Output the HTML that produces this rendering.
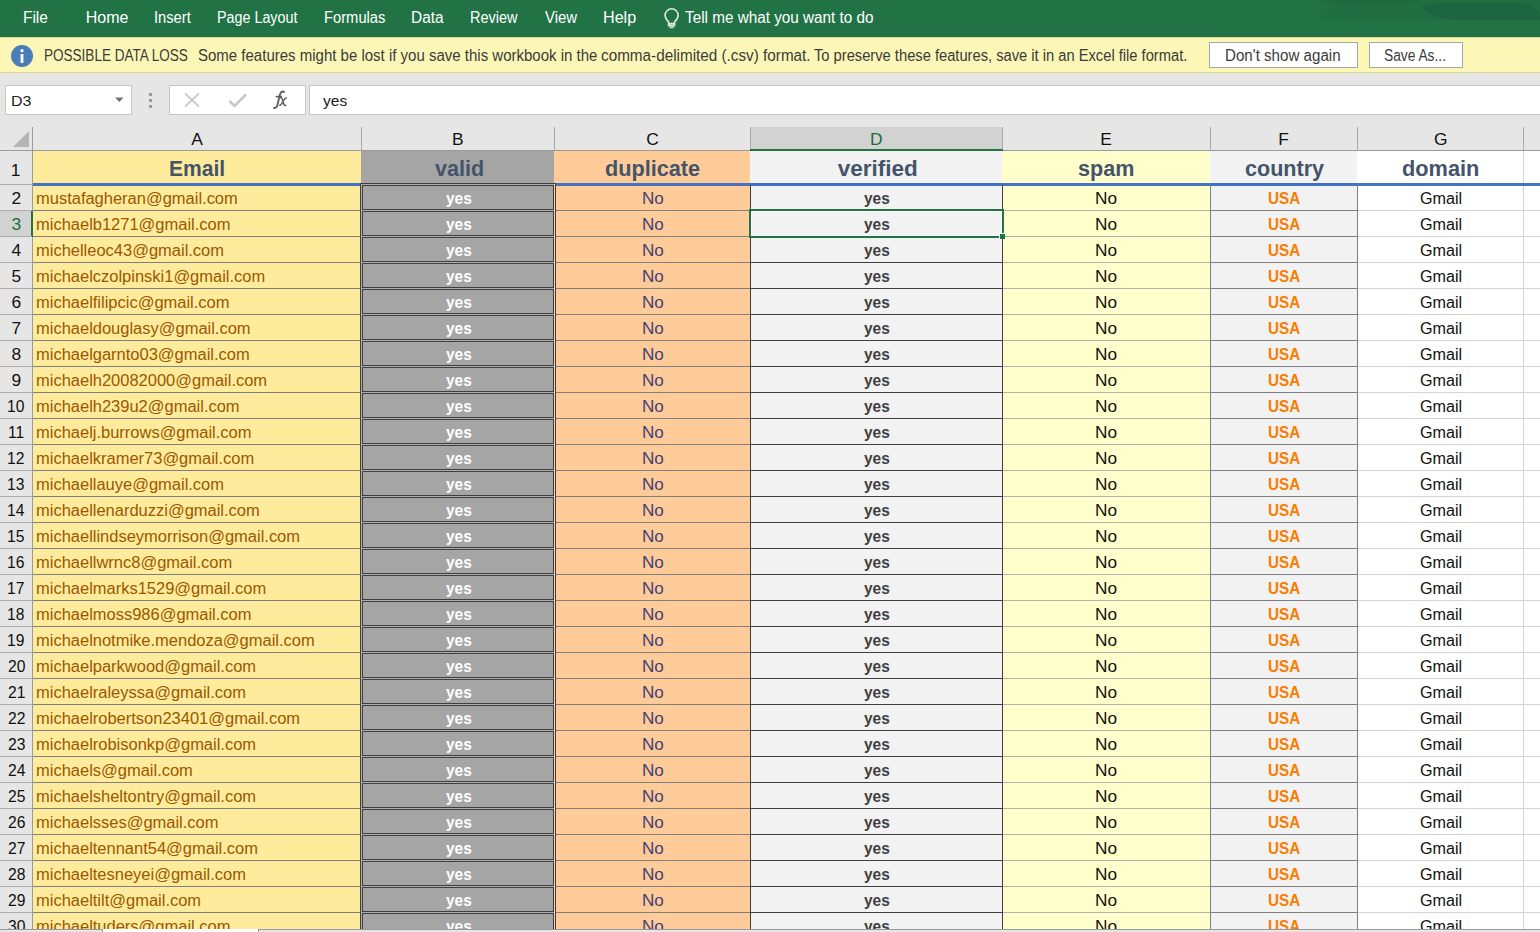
<!DOCTYPE html>
<html><head><meta charset="utf-8"><title>Excel</title>
<style>
html,body{margin:0;padding:0;width:1540px;height:932px;overflow:hidden;background:#E6E6E6;font-family:"Liberation Sans", sans-serif;}
body>div,body>span,body>svg{position:absolute;}
.t{white-space:pre;line-height:1;transform-origin:0 0;}
</style></head><body>
<div style="left:0px;top:0px;width:1540px;height:37px;background:#217346;"></div>
<div style="left:1290px;top:0;width:250px;height:20px;background:linear-gradient(to right,rgba(25,80,45,0) 0%,rgba(25,80,45,0.16) 25%,rgba(25,80,45,0.16) 100%)"></div>
<svg style="left:1300px;top:0" width="240" height="21" viewBox="0 0 240 21"><path d="M20 0H110C118 2 100 5 60 5 40 5 25 3 20 0z" fill="#1F6841" opacity="0.8"/><path d="M123 6C126 4 135 3 150 3H220C232 3 238 10 240 16V20H160C140 20 125 14 123 6z" fill="#1D6440"/><path d="M180 0H235L240 6V0z" fill="#1F6A42"/></svg>
<svg style="left:662px;top:6px" width="20" height="24" viewBox="0 0 20 24"><path d="M6.4 15.6C4.6 14 3.1 12 3.1 9.3A6.5 6.5 0 0 1 16.1 9.3C16.1 12 14.6 14 12.8 15.6" fill="none" stroke="#dfe9e2" stroke-width="1.6"/><path d="M6.6 15.3V19.6H12.6V15.3M6.6 17.6H12.6" fill="none" stroke="#dfe9e2" stroke-width="1.6"/><path d="M7.6 21.5H11.6" stroke="#dfe9e2" stroke-width="1.4"/></svg>
<div style="left:0px;top:37px;width:1540px;height:35px;background:#FCF7B7;"></div>
<div style="left:0px;top:72px;width:1540px;height:1px;background:#DCD592;"></div>
<div style="left:0px;top:37px;width:1540px;height:1px;background:#E4DC8C;"></div>
<svg style="left:10px;top:44px" width="24" height="24" viewBox="0 0 24 24"><circle cx="12" cy="12" r="11" fill="#4A7EBB"/><rect x="10.6" y="10" width="2.8" height="9" fill="#fff"/><circle cx="12" cy="6.7" r="1.6" fill="#fff"/></svg>
<div style="left:1209px;top:42px;width:149px;height:26px;background:#fff;border:1px solid #A6A6AC;box-sizing:border-box"></div>
<div style="left:1369px;top:42px;width:94px;height:26px;background:#fff;border:1px solid #A6A6AC;box-sizing:border-box"></div>
<div style="left:0px;top:73px;width:1540px;height:54px;background:#E6E6E6;"></div>
<div style="left:5px;top:85px;width:127px;height:30px;background:#fff;border:1px solid #C6C6C6;box-sizing:border-box"></div>
<svg style="left:115px;top:97px" width="9" height="6"><path d="M0 0.5h8.5L4.25 5z" fill="#707070"/></svg>
<div style="left:149px;top:93px;width:3px;height:3px;background:#9a9a9a;"></div>
<div style="left:149px;top:99px;width:3px;height:3px;background:#9a9a9a;"></div>
<div style="left:149px;top:105px;width:3px;height:3px;background:#9a9a9a;"></div>
<div style="left:169px;top:85px;width:137px;height:30px;background:#fff;border:1px solid #C6C6C6;box-sizing:border-box"></div>
<svg style="left:183px;top:92px" width="18" height="16"><path d="M2 1.5L16 14.5M16 1.5L2 14.5" stroke="#c8c8c8" stroke-width="1.8"/></svg>
<svg style="left:228px;top:92px" width="20" height="17"><path d="M1.5 9l5 5L18 2.5" fill="none" stroke="#c8c8c8" stroke-width="2.6"/></svg>
<svg style="left:268px;top:88px" width="24" height="24" viewBox="0 0 24 24"><path d="M16.4 4.8C16 3.3 14.4 3 13.2 4.1 12 5.3 11.5 7.6 11 10.2L9.3 17.4C8.7 19.7 6.9 20.5 5.2 19.6" fill="none" stroke="#5f5f5f" stroke-width="1.9"/><path d="M7.6 8.6H14" stroke="#5f5f5f" stroke-width="1.6"/><path d="M12 9.9C13.5 9.4 14.2 10.6 14.8 12.6L15.8 16C16.2 17.4 17.2 17.9 18.3 17.2M18.9 10.2C17.6 9.8 16.5 10.8 15.3 12.8L13.7 15.6C13 16.9 12.1 17.6 11.1 17.1" fill="none" stroke="#5f5f5f" stroke-width="1.5"/></svg>
<div style="left:309px;top:85px;width:1240px;height:30px;background:#fff;border:1px solid #C6C6C6;box-sizing:border-box"></div>
<div style="left:0px;top:127px;width:1540px;height:24px;background:#E6E6E6;"></div>
<div style="left:750px;top:127px;width:252px;height:23px;background:#D2D2D2;"></div>
<div style="left:0px;top:150px;width:1540px;height:1px;background:#9B9B9B;"></div>
<div style="left:361px;top:127px;width:1px;height:23px;background:#ABABAB;"></div>
<div style="left:554px;top:127px;width:1px;height:23px;background:#ABABAB;"></div>
<div style="left:750px;top:127px;width:1px;height:23px;background:#ABABAB;"></div>
<div style="left:1002px;top:127px;width:1px;height:23px;background:#ABABAB;"></div>
<div style="left:1210px;top:127px;width:1px;height:23px;background:#ABABAB;"></div>
<div style="left:1357px;top:127px;width:1px;height:23px;background:#ABABAB;"></div>
<div style="left:1523px;top:127px;width:1px;height:23px;background:#ABABAB;"></div>
<div style="left:750px;top:149px;width:253px;height:2px;background:#217346;"></div>
<svg style="left:13px;top:131px" width="17" height="16"><path d="M16 0V16H0z" fill="#B4B4B4"/></svg>
<div style="left:0px;top:151px;width:32px;height:781px;background:#E6E6E6;"></div>
<div style="left:32px;top:127px;width:1px;height:805px;background:#9B9B9B;"></div>
<div style="left:0px;top:211px;width:31px;height:26px;background:#D2D2D2;"></div>
<div style="left:0px;top:184px;width:32px;height:1px;background:#ABABAB;"></div>
<div style="left:31px;top:211px;width:2px;height:26px;background:#217346;"></div>
<div style="left:33px;top:151px;width:328px;height:781px;background:#FFEB9C;"></div>
<div style="left:361px;top:151px;width:193px;height:781px;background:#A5A5A5;"></div>
<div style="left:554px;top:151px;width:196px;height:781px;background:#FFCC99;"></div>
<div style="left:750px;top:151px;width:252px;height:781px;background:#F2F2F2;"></div>
<div style="left:1002px;top:151px;width:208px;height:781px;background:#FFFFCC;"></div>
<div style="left:1210px;top:151px;width:147px;height:781px;background:#F2F2F2;"></div>
<div style="left:1357px;top:151px;width:166px;height:781px;background:#FFFFFF;"></div>
<div style="left:1523px;top:151px;width:177px;height:781px;background:#FFFFFF;"></div>
<div style="left:33px;top:183px;width:1507px;height:3px;background:#4472C4;"></div>
<div style="left:0px;top:210px;width:32px;height:1px;background:#ABABAB;"></div>
<div style="left:33px;top:210px;width:328px;height:1px;background:#7F7F7F;"></div>
<div style="left:555px;top:210px;width:195px;height:1px;background:#7F7F7F;"></div>
<div style="left:751px;top:210px;width:251px;height:1px;background:#3F3F3F;"></div>
<div style="left:1003px;top:210px;width:207px;height:1px;background:#B2B2B2;"></div>
<div style="left:1211px;top:210px;width:146px;height:1px;background:#7F7F7F;"></div>
<div style="left:1358px;top:210px;width:165px;height:1px;background:#D4D4D4;"></div>
<div style="left:1524px;top:210px;width:176px;height:1px;background:#D4D4D4;"></div>
<div style="left:0px;top:236px;width:32px;height:1px;background:#ABABAB;"></div>
<div style="left:33px;top:236px;width:328px;height:1px;background:#7F7F7F;"></div>
<div style="left:555px;top:236px;width:195px;height:1px;background:#7F7F7F;"></div>
<div style="left:751px;top:236px;width:251px;height:1px;background:#3F3F3F;"></div>
<div style="left:1003px;top:236px;width:207px;height:1px;background:#B2B2B2;"></div>
<div style="left:1211px;top:236px;width:146px;height:1px;background:#7F7F7F;"></div>
<div style="left:1358px;top:236px;width:165px;height:1px;background:#D4D4D4;"></div>
<div style="left:1524px;top:236px;width:176px;height:1px;background:#D4D4D4;"></div>
<div style="left:0px;top:262px;width:32px;height:1px;background:#ABABAB;"></div>
<div style="left:33px;top:262px;width:328px;height:1px;background:#7F7F7F;"></div>
<div style="left:555px;top:262px;width:195px;height:1px;background:#7F7F7F;"></div>
<div style="left:751px;top:262px;width:251px;height:1px;background:#3F3F3F;"></div>
<div style="left:1003px;top:262px;width:207px;height:1px;background:#B2B2B2;"></div>
<div style="left:1211px;top:262px;width:146px;height:1px;background:#7F7F7F;"></div>
<div style="left:1358px;top:262px;width:165px;height:1px;background:#D4D4D4;"></div>
<div style="left:1524px;top:262px;width:176px;height:1px;background:#D4D4D4;"></div>
<div style="left:0px;top:288px;width:32px;height:1px;background:#ABABAB;"></div>
<div style="left:33px;top:288px;width:328px;height:1px;background:#7F7F7F;"></div>
<div style="left:555px;top:288px;width:195px;height:1px;background:#7F7F7F;"></div>
<div style="left:751px;top:288px;width:251px;height:1px;background:#3F3F3F;"></div>
<div style="left:1003px;top:288px;width:207px;height:1px;background:#B2B2B2;"></div>
<div style="left:1211px;top:288px;width:146px;height:1px;background:#7F7F7F;"></div>
<div style="left:1358px;top:288px;width:165px;height:1px;background:#D4D4D4;"></div>
<div style="left:1524px;top:288px;width:176px;height:1px;background:#D4D4D4;"></div>
<div style="left:0px;top:314px;width:32px;height:1px;background:#ABABAB;"></div>
<div style="left:33px;top:314px;width:328px;height:1px;background:#7F7F7F;"></div>
<div style="left:555px;top:314px;width:195px;height:1px;background:#7F7F7F;"></div>
<div style="left:751px;top:314px;width:251px;height:1px;background:#3F3F3F;"></div>
<div style="left:1003px;top:314px;width:207px;height:1px;background:#B2B2B2;"></div>
<div style="left:1211px;top:314px;width:146px;height:1px;background:#7F7F7F;"></div>
<div style="left:1358px;top:314px;width:165px;height:1px;background:#D4D4D4;"></div>
<div style="left:1524px;top:314px;width:176px;height:1px;background:#D4D4D4;"></div>
<div style="left:0px;top:340px;width:32px;height:1px;background:#ABABAB;"></div>
<div style="left:33px;top:340px;width:328px;height:1px;background:#7F7F7F;"></div>
<div style="left:555px;top:340px;width:195px;height:1px;background:#7F7F7F;"></div>
<div style="left:751px;top:340px;width:251px;height:1px;background:#3F3F3F;"></div>
<div style="left:1003px;top:340px;width:207px;height:1px;background:#B2B2B2;"></div>
<div style="left:1211px;top:340px;width:146px;height:1px;background:#7F7F7F;"></div>
<div style="left:1358px;top:340px;width:165px;height:1px;background:#D4D4D4;"></div>
<div style="left:1524px;top:340px;width:176px;height:1px;background:#D4D4D4;"></div>
<div style="left:0px;top:366px;width:32px;height:1px;background:#ABABAB;"></div>
<div style="left:33px;top:366px;width:328px;height:1px;background:#7F7F7F;"></div>
<div style="left:555px;top:366px;width:195px;height:1px;background:#7F7F7F;"></div>
<div style="left:751px;top:366px;width:251px;height:1px;background:#3F3F3F;"></div>
<div style="left:1003px;top:366px;width:207px;height:1px;background:#B2B2B2;"></div>
<div style="left:1211px;top:366px;width:146px;height:1px;background:#7F7F7F;"></div>
<div style="left:1358px;top:366px;width:165px;height:1px;background:#D4D4D4;"></div>
<div style="left:1524px;top:366px;width:176px;height:1px;background:#D4D4D4;"></div>
<div style="left:0px;top:392px;width:32px;height:1px;background:#ABABAB;"></div>
<div style="left:33px;top:392px;width:328px;height:1px;background:#7F7F7F;"></div>
<div style="left:555px;top:392px;width:195px;height:1px;background:#7F7F7F;"></div>
<div style="left:751px;top:392px;width:251px;height:1px;background:#3F3F3F;"></div>
<div style="left:1003px;top:392px;width:207px;height:1px;background:#B2B2B2;"></div>
<div style="left:1211px;top:392px;width:146px;height:1px;background:#7F7F7F;"></div>
<div style="left:1358px;top:392px;width:165px;height:1px;background:#D4D4D4;"></div>
<div style="left:1524px;top:392px;width:176px;height:1px;background:#D4D4D4;"></div>
<div style="left:0px;top:418px;width:32px;height:1px;background:#ABABAB;"></div>
<div style="left:33px;top:418px;width:328px;height:1px;background:#7F7F7F;"></div>
<div style="left:555px;top:418px;width:195px;height:1px;background:#7F7F7F;"></div>
<div style="left:751px;top:418px;width:251px;height:1px;background:#3F3F3F;"></div>
<div style="left:1003px;top:418px;width:207px;height:1px;background:#B2B2B2;"></div>
<div style="left:1211px;top:418px;width:146px;height:1px;background:#7F7F7F;"></div>
<div style="left:1358px;top:418px;width:165px;height:1px;background:#D4D4D4;"></div>
<div style="left:1524px;top:418px;width:176px;height:1px;background:#D4D4D4;"></div>
<div style="left:0px;top:444px;width:32px;height:1px;background:#ABABAB;"></div>
<div style="left:33px;top:444px;width:328px;height:1px;background:#7F7F7F;"></div>
<div style="left:555px;top:444px;width:195px;height:1px;background:#7F7F7F;"></div>
<div style="left:751px;top:444px;width:251px;height:1px;background:#3F3F3F;"></div>
<div style="left:1003px;top:444px;width:207px;height:1px;background:#B2B2B2;"></div>
<div style="left:1211px;top:444px;width:146px;height:1px;background:#7F7F7F;"></div>
<div style="left:1358px;top:444px;width:165px;height:1px;background:#D4D4D4;"></div>
<div style="left:1524px;top:444px;width:176px;height:1px;background:#D4D4D4;"></div>
<div style="left:0px;top:470px;width:32px;height:1px;background:#ABABAB;"></div>
<div style="left:33px;top:470px;width:328px;height:1px;background:#7F7F7F;"></div>
<div style="left:555px;top:470px;width:195px;height:1px;background:#7F7F7F;"></div>
<div style="left:751px;top:470px;width:251px;height:1px;background:#3F3F3F;"></div>
<div style="left:1003px;top:470px;width:207px;height:1px;background:#B2B2B2;"></div>
<div style="left:1211px;top:470px;width:146px;height:1px;background:#7F7F7F;"></div>
<div style="left:1358px;top:470px;width:165px;height:1px;background:#D4D4D4;"></div>
<div style="left:1524px;top:470px;width:176px;height:1px;background:#D4D4D4;"></div>
<div style="left:0px;top:496px;width:32px;height:1px;background:#ABABAB;"></div>
<div style="left:33px;top:496px;width:328px;height:1px;background:#7F7F7F;"></div>
<div style="left:555px;top:496px;width:195px;height:1px;background:#7F7F7F;"></div>
<div style="left:751px;top:496px;width:251px;height:1px;background:#3F3F3F;"></div>
<div style="left:1003px;top:496px;width:207px;height:1px;background:#B2B2B2;"></div>
<div style="left:1211px;top:496px;width:146px;height:1px;background:#7F7F7F;"></div>
<div style="left:1358px;top:496px;width:165px;height:1px;background:#D4D4D4;"></div>
<div style="left:1524px;top:496px;width:176px;height:1px;background:#D4D4D4;"></div>
<div style="left:0px;top:522px;width:32px;height:1px;background:#ABABAB;"></div>
<div style="left:33px;top:522px;width:328px;height:1px;background:#7F7F7F;"></div>
<div style="left:555px;top:522px;width:195px;height:1px;background:#7F7F7F;"></div>
<div style="left:751px;top:522px;width:251px;height:1px;background:#3F3F3F;"></div>
<div style="left:1003px;top:522px;width:207px;height:1px;background:#B2B2B2;"></div>
<div style="left:1211px;top:522px;width:146px;height:1px;background:#7F7F7F;"></div>
<div style="left:1358px;top:522px;width:165px;height:1px;background:#D4D4D4;"></div>
<div style="left:1524px;top:522px;width:176px;height:1px;background:#D4D4D4;"></div>
<div style="left:0px;top:548px;width:32px;height:1px;background:#ABABAB;"></div>
<div style="left:33px;top:548px;width:328px;height:1px;background:#7F7F7F;"></div>
<div style="left:555px;top:548px;width:195px;height:1px;background:#7F7F7F;"></div>
<div style="left:751px;top:548px;width:251px;height:1px;background:#3F3F3F;"></div>
<div style="left:1003px;top:548px;width:207px;height:1px;background:#B2B2B2;"></div>
<div style="left:1211px;top:548px;width:146px;height:1px;background:#7F7F7F;"></div>
<div style="left:1358px;top:548px;width:165px;height:1px;background:#D4D4D4;"></div>
<div style="left:1524px;top:548px;width:176px;height:1px;background:#D4D4D4;"></div>
<div style="left:0px;top:574px;width:32px;height:1px;background:#ABABAB;"></div>
<div style="left:33px;top:574px;width:328px;height:1px;background:#7F7F7F;"></div>
<div style="left:555px;top:574px;width:195px;height:1px;background:#7F7F7F;"></div>
<div style="left:751px;top:574px;width:251px;height:1px;background:#3F3F3F;"></div>
<div style="left:1003px;top:574px;width:207px;height:1px;background:#B2B2B2;"></div>
<div style="left:1211px;top:574px;width:146px;height:1px;background:#7F7F7F;"></div>
<div style="left:1358px;top:574px;width:165px;height:1px;background:#D4D4D4;"></div>
<div style="left:1524px;top:574px;width:176px;height:1px;background:#D4D4D4;"></div>
<div style="left:0px;top:600px;width:32px;height:1px;background:#ABABAB;"></div>
<div style="left:33px;top:600px;width:328px;height:1px;background:#7F7F7F;"></div>
<div style="left:555px;top:600px;width:195px;height:1px;background:#7F7F7F;"></div>
<div style="left:751px;top:600px;width:251px;height:1px;background:#3F3F3F;"></div>
<div style="left:1003px;top:600px;width:207px;height:1px;background:#B2B2B2;"></div>
<div style="left:1211px;top:600px;width:146px;height:1px;background:#7F7F7F;"></div>
<div style="left:1358px;top:600px;width:165px;height:1px;background:#D4D4D4;"></div>
<div style="left:1524px;top:600px;width:176px;height:1px;background:#D4D4D4;"></div>
<div style="left:0px;top:626px;width:32px;height:1px;background:#ABABAB;"></div>
<div style="left:33px;top:626px;width:328px;height:1px;background:#7F7F7F;"></div>
<div style="left:555px;top:626px;width:195px;height:1px;background:#7F7F7F;"></div>
<div style="left:751px;top:626px;width:251px;height:1px;background:#3F3F3F;"></div>
<div style="left:1003px;top:626px;width:207px;height:1px;background:#B2B2B2;"></div>
<div style="left:1211px;top:626px;width:146px;height:1px;background:#7F7F7F;"></div>
<div style="left:1358px;top:626px;width:165px;height:1px;background:#D4D4D4;"></div>
<div style="left:1524px;top:626px;width:176px;height:1px;background:#D4D4D4;"></div>
<div style="left:0px;top:652px;width:32px;height:1px;background:#ABABAB;"></div>
<div style="left:33px;top:652px;width:328px;height:1px;background:#7F7F7F;"></div>
<div style="left:555px;top:652px;width:195px;height:1px;background:#7F7F7F;"></div>
<div style="left:751px;top:652px;width:251px;height:1px;background:#3F3F3F;"></div>
<div style="left:1003px;top:652px;width:207px;height:1px;background:#B2B2B2;"></div>
<div style="left:1211px;top:652px;width:146px;height:1px;background:#7F7F7F;"></div>
<div style="left:1358px;top:652px;width:165px;height:1px;background:#D4D4D4;"></div>
<div style="left:1524px;top:652px;width:176px;height:1px;background:#D4D4D4;"></div>
<div style="left:0px;top:678px;width:32px;height:1px;background:#ABABAB;"></div>
<div style="left:33px;top:678px;width:328px;height:1px;background:#7F7F7F;"></div>
<div style="left:555px;top:678px;width:195px;height:1px;background:#7F7F7F;"></div>
<div style="left:751px;top:678px;width:251px;height:1px;background:#3F3F3F;"></div>
<div style="left:1003px;top:678px;width:207px;height:1px;background:#B2B2B2;"></div>
<div style="left:1211px;top:678px;width:146px;height:1px;background:#7F7F7F;"></div>
<div style="left:1358px;top:678px;width:165px;height:1px;background:#D4D4D4;"></div>
<div style="left:1524px;top:678px;width:176px;height:1px;background:#D4D4D4;"></div>
<div style="left:0px;top:704px;width:32px;height:1px;background:#ABABAB;"></div>
<div style="left:33px;top:704px;width:328px;height:1px;background:#7F7F7F;"></div>
<div style="left:555px;top:704px;width:195px;height:1px;background:#7F7F7F;"></div>
<div style="left:751px;top:704px;width:251px;height:1px;background:#3F3F3F;"></div>
<div style="left:1003px;top:704px;width:207px;height:1px;background:#B2B2B2;"></div>
<div style="left:1211px;top:704px;width:146px;height:1px;background:#7F7F7F;"></div>
<div style="left:1358px;top:704px;width:165px;height:1px;background:#D4D4D4;"></div>
<div style="left:1524px;top:704px;width:176px;height:1px;background:#D4D4D4;"></div>
<div style="left:0px;top:730px;width:32px;height:1px;background:#ABABAB;"></div>
<div style="left:33px;top:730px;width:328px;height:1px;background:#7F7F7F;"></div>
<div style="left:555px;top:730px;width:195px;height:1px;background:#7F7F7F;"></div>
<div style="left:751px;top:730px;width:251px;height:1px;background:#3F3F3F;"></div>
<div style="left:1003px;top:730px;width:207px;height:1px;background:#B2B2B2;"></div>
<div style="left:1211px;top:730px;width:146px;height:1px;background:#7F7F7F;"></div>
<div style="left:1358px;top:730px;width:165px;height:1px;background:#D4D4D4;"></div>
<div style="left:1524px;top:730px;width:176px;height:1px;background:#D4D4D4;"></div>
<div style="left:0px;top:756px;width:32px;height:1px;background:#ABABAB;"></div>
<div style="left:33px;top:756px;width:328px;height:1px;background:#7F7F7F;"></div>
<div style="left:555px;top:756px;width:195px;height:1px;background:#7F7F7F;"></div>
<div style="left:751px;top:756px;width:251px;height:1px;background:#3F3F3F;"></div>
<div style="left:1003px;top:756px;width:207px;height:1px;background:#B2B2B2;"></div>
<div style="left:1211px;top:756px;width:146px;height:1px;background:#7F7F7F;"></div>
<div style="left:1358px;top:756px;width:165px;height:1px;background:#D4D4D4;"></div>
<div style="left:1524px;top:756px;width:176px;height:1px;background:#D4D4D4;"></div>
<div style="left:0px;top:782px;width:32px;height:1px;background:#ABABAB;"></div>
<div style="left:33px;top:782px;width:328px;height:1px;background:#7F7F7F;"></div>
<div style="left:555px;top:782px;width:195px;height:1px;background:#7F7F7F;"></div>
<div style="left:751px;top:782px;width:251px;height:1px;background:#3F3F3F;"></div>
<div style="left:1003px;top:782px;width:207px;height:1px;background:#B2B2B2;"></div>
<div style="left:1211px;top:782px;width:146px;height:1px;background:#7F7F7F;"></div>
<div style="left:1358px;top:782px;width:165px;height:1px;background:#D4D4D4;"></div>
<div style="left:1524px;top:782px;width:176px;height:1px;background:#D4D4D4;"></div>
<div style="left:0px;top:808px;width:32px;height:1px;background:#ABABAB;"></div>
<div style="left:33px;top:808px;width:328px;height:1px;background:#7F7F7F;"></div>
<div style="left:555px;top:808px;width:195px;height:1px;background:#7F7F7F;"></div>
<div style="left:751px;top:808px;width:251px;height:1px;background:#3F3F3F;"></div>
<div style="left:1003px;top:808px;width:207px;height:1px;background:#B2B2B2;"></div>
<div style="left:1211px;top:808px;width:146px;height:1px;background:#7F7F7F;"></div>
<div style="left:1358px;top:808px;width:165px;height:1px;background:#D4D4D4;"></div>
<div style="left:1524px;top:808px;width:176px;height:1px;background:#D4D4D4;"></div>
<div style="left:0px;top:834px;width:32px;height:1px;background:#ABABAB;"></div>
<div style="left:33px;top:834px;width:328px;height:1px;background:#7F7F7F;"></div>
<div style="left:555px;top:834px;width:195px;height:1px;background:#7F7F7F;"></div>
<div style="left:751px;top:834px;width:251px;height:1px;background:#3F3F3F;"></div>
<div style="left:1003px;top:834px;width:207px;height:1px;background:#B2B2B2;"></div>
<div style="left:1211px;top:834px;width:146px;height:1px;background:#7F7F7F;"></div>
<div style="left:1358px;top:834px;width:165px;height:1px;background:#D4D4D4;"></div>
<div style="left:1524px;top:834px;width:176px;height:1px;background:#D4D4D4;"></div>
<div style="left:0px;top:860px;width:32px;height:1px;background:#ABABAB;"></div>
<div style="left:33px;top:860px;width:328px;height:1px;background:#7F7F7F;"></div>
<div style="left:555px;top:860px;width:195px;height:1px;background:#7F7F7F;"></div>
<div style="left:751px;top:860px;width:251px;height:1px;background:#3F3F3F;"></div>
<div style="left:1003px;top:860px;width:207px;height:1px;background:#B2B2B2;"></div>
<div style="left:1211px;top:860px;width:146px;height:1px;background:#7F7F7F;"></div>
<div style="left:1358px;top:860px;width:165px;height:1px;background:#D4D4D4;"></div>
<div style="left:1524px;top:860px;width:176px;height:1px;background:#D4D4D4;"></div>
<div style="left:0px;top:886px;width:32px;height:1px;background:#ABABAB;"></div>
<div style="left:33px;top:886px;width:328px;height:1px;background:#7F7F7F;"></div>
<div style="left:555px;top:886px;width:195px;height:1px;background:#7F7F7F;"></div>
<div style="left:751px;top:886px;width:251px;height:1px;background:#3F3F3F;"></div>
<div style="left:1003px;top:886px;width:207px;height:1px;background:#B2B2B2;"></div>
<div style="left:1211px;top:886px;width:146px;height:1px;background:#7F7F7F;"></div>
<div style="left:1358px;top:886px;width:165px;height:1px;background:#D4D4D4;"></div>
<div style="left:1524px;top:886px;width:176px;height:1px;background:#D4D4D4;"></div>
<div style="left:0px;top:912px;width:32px;height:1px;background:#ABABAB;"></div>
<div style="left:33px;top:912px;width:328px;height:1px;background:#7F7F7F;"></div>
<div style="left:555px;top:912px;width:195px;height:1px;background:#7F7F7F;"></div>
<div style="left:751px;top:912px;width:251px;height:1px;background:#3F3F3F;"></div>
<div style="left:1003px;top:912px;width:207px;height:1px;background:#B2B2B2;"></div>
<div style="left:1211px;top:912px;width:146px;height:1px;background:#7F7F7F;"></div>
<div style="left:1358px;top:912px;width:165px;height:1px;background:#D4D4D4;"></div>
<div style="left:1524px;top:912px;width:176px;height:1px;background:#D4D4D4;"></div>
<div style="left:0px;top:938px;width:32px;height:1px;background:#ABABAB;"></div>
<div style="left:33px;top:938px;width:328px;height:1px;background:#7F7F7F;"></div>
<div style="left:555px;top:938px;width:195px;height:1px;background:#7F7F7F;"></div>
<div style="left:751px;top:938px;width:251px;height:1px;background:#3F3F3F;"></div>
<div style="left:1003px;top:938px;width:207px;height:1px;background:#B2B2B2;"></div>
<div style="left:1211px;top:938px;width:146px;height:1px;background:#7F7F7F;"></div>
<div style="left:1358px;top:938px;width:165px;height:1px;background:#D4D4D4;"></div>
<div style="left:1524px;top:938px;width:176px;height:1px;background:#D4D4D4;"></div>
<div style="left:750px;top:185px;width:1px;height:747px;background:#3F3F3F;"></div>
<div style="left:1002px;top:185px;width:1px;height:747px;background:#3F3F3F;"></div>
<div style="left:1210px;top:185px;width:1px;height:747px;background:#7F7F7F;"></div>
<div style="left:1357px;top:185px;width:1px;height:747px;background:#7F7F7F;"></div>
<div style="left:1523px;top:151px;width:1px;height:32px;background:#D4D4D4;"></div>
<div style="left:1523px;top:186px;width:1px;height:746px;background:#D4D4D4;"></div>
<div style="left:360px;top:183px;width:196px;height:1px;background:#3F3F3F;"></div>
<div style="left:360px;top:183px;width:1px;height:749px;background:#3F3F3F;"></div>
<div style="left:555px;top:183px;width:1px;height:749px;background:#3F3F3F;"></div>
<div style="left:361px;top:184px;width:1px;height:748px;background:#ADADAD;"></div>
<div style="left:554px;top:184px;width:1px;height:748px;background:#FFD29F;"></div>
<div style="left:361px;top:184px;width:193px;height:1px;background:#ADADAD;"></div>
<div style="left:362px;top:185px;width:192px;height:25px;border:1px solid #3F3F3F;box-sizing:border-box;background:#A5A5A5"></div>
<div style="left:361px;top:210px;width:193px;height:1px;background:#ADADAD;"></div>
<div style="left:362px;top:211px;width:192px;height:25px;border:1px solid #3F3F3F;box-sizing:border-box;background:#A5A5A5"></div>
<div style="left:361px;top:236px;width:193px;height:1px;background:#ADADAD;"></div>
<div style="left:362px;top:237px;width:192px;height:25px;border:1px solid #3F3F3F;box-sizing:border-box;background:#A5A5A5"></div>
<div style="left:361px;top:262px;width:193px;height:1px;background:#ADADAD;"></div>
<div style="left:362px;top:263px;width:192px;height:25px;border:1px solid #3F3F3F;box-sizing:border-box;background:#A5A5A5"></div>
<div style="left:361px;top:288px;width:193px;height:1px;background:#ADADAD;"></div>
<div style="left:362px;top:289px;width:192px;height:25px;border:1px solid #3F3F3F;box-sizing:border-box;background:#A5A5A5"></div>
<div style="left:361px;top:314px;width:193px;height:1px;background:#ADADAD;"></div>
<div style="left:362px;top:315px;width:192px;height:25px;border:1px solid #3F3F3F;box-sizing:border-box;background:#A5A5A5"></div>
<div style="left:361px;top:340px;width:193px;height:1px;background:#ADADAD;"></div>
<div style="left:362px;top:341px;width:192px;height:25px;border:1px solid #3F3F3F;box-sizing:border-box;background:#A5A5A5"></div>
<div style="left:361px;top:366px;width:193px;height:1px;background:#ADADAD;"></div>
<div style="left:362px;top:367px;width:192px;height:25px;border:1px solid #3F3F3F;box-sizing:border-box;background:#A5A5A5"></div>
<div style="left:361px;top:392px;width:193px;height:1px;background:#ADADAD;"></div>
<div style="left:362px;top:393px;width:192px;height:25px;border:1px solid #3F3F3F;box-sizing:border-box;background:#A5A5A5"></div>
<div style="left:361px;top:418px;width:193px;height:1px;background:#ADADAD;"></div>
<div style="left:362px;top:419px;width:192px;height:25px;border:1px solid #3F3F3F;box-sizing:border-box;background:#A5A5A5"></div>
<div style="left:361px;top:444px;width:193px;height:1px;background:#ADADAD;"></div>
<div style="left:362px;top:445px;width:192px;height:25px;border:1px solid #3F3F3F;box-sizing:border-box;background:#A5A5A5"></div>
<div style="left:361px;top:470px;width:193px;height:1px;background:#ADADAD;"></div>
<div style="left:362px;top:471px;width:192px;height:25px;border:1px solid #3F3F3F;box-sizing:border-box;background:#A5A5A5"></div>
<div style="left:361px;top:496px;width:193px;height:1px;background:#ADADAD;"></div>
<div style="left:362px;top:497px;width:192px;height:25px;border:1px solid #3F3F3F;box-sizing:border-box;background:#A5A5A5"></div>
<div style="left:361px;top:522px;width:193px;height:1px;background:#ADADAD;"></div>
<div style="left:362px;top:523px;width:192px;height:25px;border:1px solid #3F3F3F;box-sizing:border-box;background:#A5A5A5"></div>
<div style="left:361px;top:548px;width:193px;height:1px;background:#ADADAD;"></div>
<div style="left:362px;top:549px;width:192px;height:25px;border:1px solid #3F3F3F;box-sizing:border-box;background:#A5A5A5"></div>
<div style="left:361px;top:574px;width:193px;height:1px;background:#ADADAD;"></div>
<div style="left:362px;top:575px;width:192px;height:25px;border:1px solid #3F3F3F;box-sizing:border-box;background:#A5A5A5"></div>
<div style="left:361px;top:600px;width:193px;height:1px;background:#ADADAD;"></div>
<div style="left:362px;top:601px;width:192px;height:25px;border:1px solid #3F3F3F;box-sizing:border-box;background:#A5A5A5"></div>
<div style="left:361px;top:626px;width:193px;height:1px;background:#ADADAD;"></div>
<div style="left:362px;top:627px;width:192px;height:25px;border:1px solid #3F3F3F;box-sizing:border-box;background:#A5A5A5"></div>
<div style="left:361px;top:652px;width:193px;height:1px;background:#ADADAD;"></div>
<div style="left:362px;top:653px;width:192px;height:25px;border:1px solid #3F3F3F;box-sizing:border-box;background:#A5A5A5"></div>
<div style="left:361px;top:678px;width:193px;height:1px;background:#ADADAD;"></div>
<div style="left:362px;top:679px;width:192px;height:25px;border:1px solid #3F3F3F;box-sizing:border-box;background:#A5A5A5"></div>
<div style="left:361px;top:704px;width:193px;height:1px;background:#ADADAD;"></div>
<div style="left:362px;top:705px;width:192px;height:25px;border:1px solid #3F3F3F;box-sizing:border-box;background:#A5A5A5"></div>
<div style="left:361px;top:730px;width:193px;height:1px;background:#ADADAD;"></div>
<div style="left:362px;top:731px;width:192px;height:25px;border:1px solid #3F3F3F;box-sizing:border-box;background:#A5A5A5"></div>
<div style="left:361px;top:756px;width:193px;height:1px;background:#ADADAD;"></div>
<div style="left:362px;top:757px;width:192px;height:25px;border:1px solid #3F3F3F;box-sizing:border-box;background:#A5A5A5"></div>
<div style="left:361px;top:782px;width:193px;height:1px;background:#ADADAD;"></div>
<div style="left:362px;top:783px;width:192px;height:25px;border:1px solid #3F3F3F;box-sizing:border-box;background:#A5A5A5"></div>
<div style="left:361px;top:808px;width:193px;height:1px;background:#ADADAD;"></div>
<div style="left:362px;top:809px;width:192px;height:25px;border:1px solid #3F3F3F;box-sizing:border-box;background:#A5A5A5"></div>
<div style="left:361px;top:834px;width:193px;height:1px;background:#ADADAD;"></div>
<div style="left:362px;top:835px;width:192px;height:25px;border:1px solid #3F3F3F;box-sizing:border-box;background:#A5A5A5"></div>
<div style="left:361px;top:860px;width:193px;height:1px;background:#ADADAD;"></div>
<div style="left:362px;top:861px;width:192px;height:25px;border:1px solid #3F3F3F;box-sizing:border-box;background:#A5A5A5"></div>
<div style="left:361px;top:886px;width:193px;height:1px;background:#ADADAD;"></div>
<div style="left:362px;top:887px;width:192px;height:25px;border:1px solid #3F3F3F;box-sizing:border-box;background:#A5A5A5"></div>
<div style="left:361px;top:912px;width:193px;height:1px;background:#ADADAD;"></div>
<div style="left:362px;top:913px;width:192px;height:25px;border:1px solid #3F3F3F;box-sizing:border-box;background:#A5A5A5"></div>
<div style="left:749px;top:209px;width:255px;height:29px;border:2px solid #217346;box-sizing:border-box"></div>
<div style="left:751px;top:211px;width:251px;height:25px;border:1px solid #FFFFFF;box-sizing:border-box"></div>
<div style="left:999px;top:233px;width:6px;height:6px;background:#FFFFFF;"></div>
<div style="left:1000px;top:234px;width:5px;height:5px;background:#217346;"></div>
<span class="t" style="left:22.77px;top:10.46px;font-size:16px;color:#fff;transform:scaleX(0.9648);">File</span>
<span class="t" style="left:85.71px;top:10.46px;font-size:16px;color:#fff;">Home</span>
<span class="t" style="left:153.98px;top:10.46px;font-size:16px;color:#fff;transform:scaleX(0.9193);">Insert</span>
<span class="t" style="left:217.45px;top:10.46px;font-size:16px;color:#fff;transform:scaleX(0.8951);">Page Layout</span>
<span class="t" style="left:323.82px;top:10.46px;font-size:16px;color:#fff;transform:scaleX(0.9213);">Formulas</span>
<span class="t" style="left:410.97px;top:10.46px;font-size:16px;color:#fff;transform:scaleX(0.9637);">Data</span>
<span class="t" style="left:470.24px;top:10.46px;font-size:16px;color:#fff;transform:scaleX(0.9043);">Review</span>
<span class="t" style="left:544.85px;top:10.46px;font-size:16px;color:#fff;transform:scaleX(0.9287);">View</span>
<span class="t" style="left:603.01px;top:10.46px;font-size:16px;color:#fff;transform:scaleX(1.0084);">Help</span>
<span class="t" style="left:684.99px;top:10.46px;font-size:16px;color:#fff;transform:scaleX(0.9553);">Tell me what you want to do</span>
<span class="t" style="left:44.32px;top:48.46px;font-size:16px;color:#3b3b3b;transform:scaleX(0.8456);">POSSIBLE DATA LOSS</span>
<span class="t" style="left:197.85px;top:48.46px;font-size:16px;color:#3b3b3b;transform:scaleX(0.9376);">Some features might be lost if you save this workbook in the</span>
<span class="t" style="left:601.09px;top:48.46px;font-size:16px;color:#3b3b3b;transform:scaleX(0.9545);">comma-delimited (.csv) format.</span>
<span class="t" style="left:813.71px;top:48.46px;font-size:16px;color:#3b3b3b;transform:scaleX(0.9186);">To preserve these features, save it in an Excel file format.</span>
<span class="t" style="left:1224.79px;top:48.46px;font-size:16px;color:#3b3b3b;transform:scaleX(0.9458);">Don&#x27;t show again</span>
<span class="t" style="left:1384.31px;top:48.46px;font-size:16px;color:#3b3b3b;transform:scaleX(0.8601);">Save As...</span>
<span class="t" style="left:11.32px;top:92.93px;font-size:15.2px;color:#222;transform:scaleX(1.0549);">D3</span>
<span class="t" style="left:323.00px;top:93.02px;font-size:15.1px;color:#222;transform:scaleX(1.0326);">yes</span>
<span class="t" style="left:191.26px;top:131.27px;font-size:17.4px;color:#111;">A</span>
<span class="t" style="left:451.91px;top:131.27px;font-size:17.4px;color:#111;">B</span>
<span class="t" style="left:646.15px;top:131.27px;font-size:17.4px;color:#111;">C</span>
<span class="t" style="left:869.89px;top:131.27px;font-size:17.4px;color:#1E6B3E;">D</span>
<span class="t" style="left:1100.32px;top:131.27px;font-size:17.4px;color:#111;">E</span>
<span class="t" style="left:1278.35px;top:131.27px;font-size:17.4px;color:#111;">F</span>
<span class="t" style="left:1433.97px;top:131.27px;font-size:17.4px;color:#111;">G</span>
<span class="t" style="left:169.13px;top:157.55px;font-size:22.5px;font-weight:bold;color:#44546A;transform:scaleX(0.9363);">Email</span>
<span class="t" style="left:434.60px;top:157.55px;font-size:22.5px;font-weight:bold;color:#44546A;transform:scaleX(0.9593);">valid</span>
<span class="t" style="left:605.13px;top:157.55px;font-size:22.5px;font-weight:bold;color:#44546A;transform:scaleX(0.9630);">duplicate</span>
<span class="t" style="left:837.70px;top:157.55px;font-size:22.5px;font-weight:bold;color:#44546A;">verified</span>
<span class="t" style="left:1078.44px;top:157.55px;font-size:22.5px;font-weight:bold;color:#44546A;transform:scaleX(0.9579);">spam</span>
<span class="t" style="left:1244.94px;top:157.55px;font-size:22.5px;font-weight:bold;color:#44546A;transform:scaleX(0.9576);">country</span>
<span class="t" style="left:1401.83px;top:157.55px;font-size:22.5px;font-weight:bold;color:#44546A;transform:scaleX(0.9672);">domain</span>
<span class="t" style="left:10.87px;top:162.27px;font-size:17.4px;color:#111;">1</span>
<span class="t" style="left:11.53px;top:190.27px;font-size:17.4px;color:#111;">2</span>
<span class="t" style="left:35.75px;top:191.46px;font-size:16px;color:#9C5700;transform:scaleX(1.0300);">mustafagheran@gmail.com</span>
<span class="t" style="left:445.85px;top:191.46px;font-size:16px;font-weight:bold;color:#fff;transform:scaleX(0.9645);">yes</span>
<span class="t" style="left:642.23px;top:191.46px;font-size:16px;color:#3F3F76;transform:scaleX(1.0668);">No</span>
<span class="t" style="left:863.75px;top:191.46px;font-size:16px;font-weight:bold;color:#3F3F3F;transform:scaleX(0.9645);">yes</span>
<span class="t" style="left:1094.62px;top:191.46px;font-size:16px;color:#111;transform:scaleX(1.0776);">No</span>
<span class="t" style="left:1267.89px;top:191.46px;font-size:16px;font-weight:bold;color:#FA7D00;transform:scaleX(0.9530);">USA</span>
<span class="t" style="left:1419.89px;top:191.46px;font-size:16px;color:#111;transform:scaleX(1.0100);">Gmail</span>
<span class="t" style="left:11.61px;top:216.27px;font-size:17.4px;color:#1E6B3E;">3</span>
<span class="t" style="left:35.75px;top:217.46px;font-size:16px;color:#9C5700;transform:scaleX(1.0300);">michaelb1271@gmail.com</span>
<span class="t" style="left:445.85px;top:217.46px;font-size:16px;font-weight:bold;color:#fff;transform:scaleX(0.9645);">yes</span>
<span class="t" style="left:642.23px;top:217.46px;font-size:16px;color:#3F3F76;transform:scaleX(1.0668);">No</span>
<span class="t" style="left:863.75px;top:217.46px;font-size:16px;font-weight:bold;color:#3F3F3F;transform:scaleX(0.9645);">yes</span>
<span class="t" style="left:1094.62px;top:217.46px;font-size:16px;color:#111;transform:scaleX(1.0776);">No</span>
<span class="t" style="left:1267.89px;top:217.46px;font-size:16px;font-weight:bold;color:#FA7D00;transform:scaleX(0.9530);">USA</span>
<span class="t" style="left:1419.89px;top:217.46px;font-size:16px;color:#111;transform:scaleX(1.0100);">Gmail</span>
<span class="t" style="left:11.61px;top:242.27px;font-size:17.4px;color:#111;">4</span>
<span class="t" style="left:35.75px;top:243.46px;font-size:16px;color:#9C5700;transform:scaleX(1.0300);">michelleoc43@gmail.com</span>
<span class="t" style="left:445.85px;top:243.46px;font-size:16px;font-weight:bold;color:#fff;transform:scaleX(0.9645);">yes</span>
<span class="t" style="left:642.23px;top:243.46px;font-size:16px;color:#3F3F76;transform:scaleX(1.0668);">No</span>
<span class="t" style="left:863.75px;top:243.46px;font-size:16px;font-weight:bold;color:#3F3F3F;transform:scaleX(0.9645);">yes</span>
<span class="t" style="left:1094.62px;top:243.46px;font-size:16px;color:#111;transform:scaleX(1.0776);">No</span>
<span class="t" style="left:1267.89px;top:243.46px;font-size:16px;font-weight:bold;color:#FA7D00;transform:scaleX(0.9530);">USA</span>
<span class="t" style="left:1419.89px;top:243.46px;font-size:16px;color:#111;transform:scaleX(1.0100);">Gmail</span>
<span class="t" style="left:11.53px;top:268.27px;font-size:17.4px;color:#111;">5</span>
<span class="t" style="left:35.75px;top:269.46px;font-size:16px;color:#9C5700;transform:scaleX(1.0300);">michaelczolpinski1@gmail.com</span>
<span class="t" style="left:445.85px;top:269.46px;font-size:16px;font-weight:bold;color:#fff;transform:scaleX(0.9645);">yes</span>
<span class="t" style="left:642.23px;top:269.46px;font-size:16px;color:#3F3F76;transform:scaleX(1.0668);">No</span>
<span class="t" style="left:863.75px;top:269.46px;font-size:16px;font-weight:bold;color:#3F3F3F;transform:scaleX(0.9645);">yes</span>
<span class="t" style="left:1094.62px;top:269.46px;font-size:16px;color:#111;transform:scaleX(1.0776);">No</span>
<span class="t" style="left:1267.89px;top:269.46px;font-size:16px;font-weight:bold;color:#FA7D00;transform:scaleX(0.9530);">USA</span>
<span class="t" style="left:1419.89px;top:269.46px;font-size:16px;color:#111;transform:scaleX(1.0100);">Gmail</span>
<span class="t" style="left:11.53px;top:294.27px;font-size:17.4px;color:#111;">6</span>
<span class="t" style="left:35.75px;top:295.46px;font-size:16px;color:#9C5700;transform:scaleX(1.0300);">michaelfilipcic@gmail.com</span>
<span class="t" style="left:445.85px;top:295.46px;font-size:16px;font-weight:bold;color:#fff;transform:scaleX(0.9645);">yes</span>
<span class="t" style="left:642.23px;top:295.46px;font-size:16px;color:#3F3F76;transform:scaleX(1.0668);">No</span>
<span class="t" style="left:863.75px;top:295.46px;font-size:16px;font-weight:bold;color:#3F3F3F;transform:scaleX(0.9645);">yes</span>
<span class="t" style="left:1094.62px;top:295.46px;font-size:16px;color:#111;transform:scaleX(1.0776);">No</span>
<span class="t" style="left:1267.89px;top:295.46px;font-size:16px;font-weight:bold;color:#FA7D00;transform:scaleX(0.9530);">USA</span>
<span class="t" style="left:1419.89px;top:295.46px;font-size:16px;color:#111;transform:scaleX(1.0100);">Gmail</span>
<span class="t" style="left:11.53px;top:320.27px;font-size:17.4px;color:#111;">7</span>
<span class="t" style="left:35.75px;top:321.46px;font-size:16px;color:#9C5700;transform:scaleX(1.0300);">michaeldouglasy@gmail.com</span>
<span class="t" style="left:445.85px;top:321.46px;font-size:16px;font-weight:bold;color:#fff;transform:scaleX(0.9645);">yes</span>
<span class="t" style="left:642.23px;top:321.46px;font-size:16px;color:#3F3F76;transform:scaleX(1.0668);">No</span>
<span class="t" style="left:863.75px;top:321.46px;font-size:16px;font-weight:bold;color:#3F3F3F;transform:scaleX(0.9645);">yes</span>
<span class="t" style="left:1094.62px;top:321.46px;font-size:16px;color:#111;transform:scaleX(1.0776);">No</span>
<span class="t" style="left:1267.89px;top:321.46px;font-size:16px;font-weight:bold;color:#FA7D00;transform:scaleX(0.9530);">USA</span>
<span class="t" style="left:1419.89px;top:321.46px;font-size:16px;color:#111;transform:scaleX(1.0100);">Gmail</span>
<span class="t" style="left:11.61px;top:346.27px;font-size:17.4px;color:#111;">8</span>
<span class="t" style="left:35.75px;top:347.46px;font-size:16px;color:#9C5700;transform:scaleX(1.0300);">michaelgarnto03@gmail.com</span>
<span class="t" style="left:445.85px;top:347.46px;font-size:16px;font-weight:bold;color:#fff;transform:scaleX(0.9645);">yes</span>
<span class="t" style="left:642.23px;top:347.46px;font-size:16px;color:#3F3F76;transform:scaleX(1.0668);">No</span>
<span class="t" style="left:863.75px;top:347.46px;font-size:16px;font-weight:bold;color:#3F3F3F;transform:scaleX(0.9645);">yes</span>
<span class="t" style="left:1094.62px;top:347.46px;font-size:16px;color:#111;transform:scaleX(1.0776);">No</span>
<span class="t" style="left:1267.89px;top:347.46px;font-size:16px;font-weight:bold;color:#FA7D00;transform:scaleX(0.9530);">USA</span>
<span class="t" style="left:1419.89px;top:347.46px;font-size:16px;color:#111;transform:scaleX(1.0100);">Gmail</span>
<span class="t" style="left:11.53px;top:372.27px;font-size:17.4px;color:#111;">9</span>
<span class="t" style="left:35.75px;top:373.46px;font-size:16px;color:#9C5700;transform:scaleX(1.0300);">michaelh20082000@gmail.com</span>
<span class="t" style="left:445.85px;top:373.46px;font-size:16px;font-weight:bold;color:#fff;transform:scaleX(0.9645);">yes</span>
<span class="t" style="left:642.23px;top:373.46px;font-size:16px;color:#3F3F76;transform:scaleX(1.0668);">No</span>
<span class="t" style="left:863.75px;top:373.46px;font-size:16px;font-weight:bold;color:#3F3F3F;transform:scaleX(0.9645);">yes</span>
<span class="t" style="left:1094.62px;top:373.46px;font-size:16px;color:#111;transform:scaleX(1.0776);">No</span>
<span class="t" style="left:1267.89px;top:373.46px;font-size:16px;font-weight:bold;color:#FA7D00;transform:scaleX(0.9530);">USA</span>
<span class="t" style="left:1419.89px;top:373.46px;font-size:16px;color:#111;transform:scaleX(1.0100);">Gmail</span>
<span class="t" style="left:7.40px;top:398.27px;font-size:17.4px;color:#111;transform:scaleX(0.9000);">10</span>
<span class="t" style="left:35.75px;top:399.46px;font-size:16px;color:#9C5700;transform:scaleX(1.0300);">michaelh239u2@gmail.com</span>
<span class="t" style="left:445.85px;top:399.46px;font-size:16px;font-weight:bold;color:#fff;transform:scaleX(0.9645);">yes</span>
<span class="t" style="left:642.23px;top:399.46px;font-size:16px;color:#3F3F76;transform:scaleX(1.0668);">No</span>
<span class="t" style="left:863.75px;top:399.46px;font-size:16px;font-weight:bold;color:#3F3F3F;transform:scaleX(0.9645);">yes</span>
<span class="t" style="left:1094.62px;top:399.46px;font-size:16px;color:#111;transform:scaleX(1.0776);">No</span>
<span class="t" style="left:1267.89px;top:399.46px;font-size:16px;font-weight:bold;color:#FA7D00;transform:scaleX(0.9530);">USA</span>
<span class="t" style="left:1419.89px;top:399.46px;font-size:16px;color:#111;transform:scaleX(1.0100);">Gmail</span>
<span class="t" style="left:8.02px;top:424.27px;font-size:17.4px;color:#111;transform:scaleX(0.9000);">11</span>
<span class="t" style="left:35.75px;top:425.46px;font-size:16px;color:#9C5700;transform:scaleX(1.0300);">michaelj.burrows@gmail.com</span>
<span class="t" style="left:445.85px;top:425.46px;font-size:16px;font-weight:bold;color:#fff;transform:scaleX(0.9645);">yes</span>
<span class="t" style="left:642.23px;top:425.46px;font-size:16px;color:#3F3F76;transform:scaleX(1.0668);">No</span>
<span class="t" style="left:863.75px;top:425.46px;font-size:16px;font-weight:bold;color:#3F3F3F;transform:scaleX(0.9645);">yes</span>
<span class="t" style="left:1094.62px;top:425.46px;font-size:16px;color:#111;transform:scaleX(1.0776);">No</span>
<span class="t" style="left:1267.89px;top:425.46px;font-size:16px;font-weight:bold;color:#FA7D00;transform:scaleX(0.9530);">USA</span>
<span class="t" style="left:1419.89px;top:425.46px;font-size:16px;color:#111;transform:scaleX(1.0100);">Gmail</span>
<span class="t" style="left:7.47px;top:450.27px;font-size:17.4px;color:#111;transform:scaleX(0.9000);">12</span>
<span class="t" style="left:35.75px;top:451.46px;font-size:16px;color:#9C5700;transform:scaleX(1.0300);">michaelkramer73@gmail.com</span>
<span class="t" style="left:445.85px;top:451.46px;font-size:16px;font-weight:bold;color:#fff;transform:scaleX(0.9645);">yes</span>
<span class="t" style="left:642.23px;top:451.46px;font-size:16px;color:#3F3F76;transform:scaleX(1.0668);">No</span>
<span class="t" style="left:863.75px;top:451.46px;font-size:16px;font-weight:bold;color:#3F3F3F;transform:scaleX(0.9645);">yes</span>
<span class="t" style="left:1094.62px;top:451.46px;font-size:16px;color:#111;transform:scaleX(1.0776);">No</span>
<span class="t" style="left:1267.89px;top:451.46px;font-size:16px;font-weight:bold;color:#FA7D00;transform:scaleX(0.9530);">USA</span>
<span class="t" style="left:1419.89px;top:451.46px;font-size:16px;color:#111;transform:scaleX(1.0100);">Gmail</span>
<span class="t" style="left:7.40px;top:476.27px;font-size:17.4px;color:#111;transform:scaleX(0.9000);">13</span>
<span class="t" style="left:35.75px;top:477.46px;font-size:16px;color:#9C5700;transform:scaleX(1.0300);">michaellauye@gmail.com</span>
<span class="t" style="left:445.85px;top:477.46px;font-size:16px;font-weight:bold;color:#fff;transform:scaleX(0.9645);">yes</span>
<span class="t" style="left:642.23px;top:477.46px;font-size:16px;color:#3F3F76;transform:scaleX(1.0668);">No</span>
<span class="t" style="left:863.75px;top:477.46px;font-size:16px;font-weight:bold;color:#3F3F3F;transform:scaleX(0.9645);">yes</span>
<span class="t" style="left:1094.62px;top:477.46px;font-size:16px;color:#111;transform:scaleX(1.0776);">No</span>
<span class="t" style="left:1267.89px;top:477.46px;font-size:16px;font-weight:bold;color:#FA7D00;transform:scaleX(0.9530);">USA</span>
<span class="t" style="left:1419.89px;top:477.46px;font-size:16px;color:#111;transform:scaleX(1.0100);">Gmail</span>
<span class="t" style="left:7.32px;top:502.27px;font-size:17.4px;color:#111;transform:scaleX(0.9000);">14</span>
<span class="t" style="left:35.75px;top:503.46px;font-size:16px;color:#9C5700;transform:scaleX(1.0300);">michaellenarduzzi@gmail.com</span>
<span class="t" style="left:445.85px;top:503.46px;font-size:16px;font-weight:bold;color:#fff;transform:scaleX(0.9645);">yes</span>
<span class="t" style="left:642.23px;top:503.46px;font-size:16px;color:#3F3F76;transform:scaleX(1.0668);">No</span>
<span class="t" style="left:863.75px;top:503.46px;font-size:16px;font-weight:bold;color:#3F3F3F;transform:scaleX(0.9645);">yes</span>
<span class="t" style="left:1094.62px;top:503.46px;font-size:16px;color:#111;transform:scaleX(1.0776);">No</span>
<span class="t" style="left:1267.89px;top:503.46px;font-size:16px;font-weight:bold;color:#FA7D00;transform:scaleX(0.9530);">USA</span>
<span class="t" style="left:1419.89px;top:503.46px;font-size:16px;color:#111;transform:scaleX(1.0100);">Gmail</span>
<span class="t" style="left:7.40px;top:528.27px;font-size:17.4px;color:#111;transform:scaleX(0.9000);">15</span>
<span class="t" style="left:35.75px;top:529.46px;font-size:16px;color:#9C5700;transform:scaleX(1.0300);">michaellindseymorrison@gmail.com</span>
<span class="t" style="left:445.85px;top:529.46px;font-size:16px;font-weight:bold;color:#fff;transform:scaleX(0.9645);">yes</span>
<span class="t" style="left:642.23px;top:529.46px;font-size:16px;color:#3F3F76;transform:scaleX(1.0668);">No</span>
<span class="t" style="left:863.75px;top:529.46px;font-size:16px;font-weight:bold;color:#3F3F3F;transform:scaleX(0.9645);">yes</span>
<span class="t" style="left:1094.62px;top:529.46px;font-size:16px;color:#111;transform:scaleX(1.0776);">No</span>
<span class="t" style="left:1267.89px;top:529.46px;font-size:16px;font-weight:bold;color:#FA7D00;transform:scaleX(0.9530);">USA</span>
<span class="t" style="left:1419.89px;top:529.46px;font-size:16px;color:#111;transform:scaleX(1.0100);">Gmail</span>
<span class="t" style="left:7.40px;top:554.27px;font-size:17.4px;color:#111;transform:scaleX(0.9000);">16</span>
<span class="t" style="left:35.75px;top:555.46px;font-size:16px;color:#9C5700;transform:scaleX(1.0300);">michaellwrnc8@gmail.com</span>
<span class="t" style="left:445.85px;top:555.46px;font-size:16px;font-weight:bold;color:#fff;transform:scaleX(0.9645);">yes</span>
<span class="t" style="left:642.23px;top:555.46px;font-size:16px;color:#3F3F76;transform:scaleX(1.0668);">No</span>
<span class="t" style="left:863.75px;top:555.46px;font-size:16px;font-weight:bold;color:#3F3F3F;transform:scaleX(0.9645);">yes</span>
<span class="t" style="left:1094.62px;top:555.46px;font-size:16px;color:#111;transform:scaleX(1.0776);">No</span>
<span class="t" style="left:1267.89px;top:555.46px;font-size:16px;font-weight:bold;color:#FA7D00;transform:scaleX(0.9530);">USA</span>
<span class="t" style="left:1419.89px;top:555.46px;font-size:16px;color:#111;transform:scaleX(1.0100);">Gmail</span>
<span class="t" style="left:7.47px;top:580.27px;font-size:17.4px;color:#111;transform:scaleX(0.9000);">17</span>
<span class="t" style="left:35.75px;top:581.46px;font-size:16px;color:#9C5700;transform:scaleX(1.0300);">michaelmarks1529@gmail.com</span>
<span class="t" style="left:445.85px;top:581.46px;font-size:16px;font-weight:bold;color:#fff;transform:scaleX(0.9645);">yes</span>
<span class="t" style="left:642.23px;top:581.46px;font-size:16px;color:#3F3F76;transform:scaleX(1.0668);">No</span>
<span class="t" style="left:863.75px;top:581.46px;font-size:16px;font-weight:bold;color:#3F3F3F;transform:scaleX(0.9645);">yes</span>
<span class="t" style="left:1094.62px;top:581.46px;font-size:16px;color:#111;transform:scaleX(1.0776);">No</span>
<span class="t" style="left:1267.89px;top:581.46px;font-size:16px;font-weight:bold;color:#FA7D00;transform:scaleX(0.9530);">USA</span>
<span class="t" style="left:1419.89px;top:581.46px;font-size:16px;color:#111;transform:scaleX(1.0100);">Gmail</span>
<span class="t" style="left:7.40px;top:606.27px;font-size:17.4px;color:#111;transform:scaleX(0.9000);">18</span>
<span class="t" style="left:35.75px;top:607.46px;font-size:16px;color:#9C5700;transform:scaleX(1.0300);">michaelmoss986@gmail.com</span>
<span class="t" style="left:445.85px;top:607.46px;font-size:16px;font-weight:bold;color:#fff;transform:scaleX(0.9645);">yes</span>
<span class="t" style="left:642.23px;top:607.46px;font-size:16px;color:#3F3F76;transform:scaleX(1.0668);">No</span>
<span class="t" style="left:863.75px;top:607.46px;font-size:16px;font-weight:bold;color:#3F3F3F;transform:scaleX(0.9645);">yes</span>
<span class="t" style="left:1094.62px;top:607.46px;font-size:16px;color:#111;transform:scaleX(1.0776);">No</span>
<span class="t" style="left:1267.89px;top:607.46px;font-size:16px;font-weight:bold;color:#FA7D00;transform:scaleX(0.9530);">USA</span>
<span class="t" style="left:1419.89px;top:607.46px;font-size:16px;color:#111;transform:scaleX(1.0100);">Gmail</span>
<span class="t" style="left:7.47px;top:632.27px;font-size:17.4px;color:#111;transform:scaleX(0.9000);">19</span>
<span class="t" style="left:35.75px;top:633.46px;font-size:16px;color:#9C5700;transform:scaleX(1.0300);">michaelnotmike.mendoza@gmail.com</span>
<span class="t" style="left:445.85px;top:633.46px;font-size:16px;font-weight:bold;color:#fff;transform:scaleX(0.9645);">yes</span>
<span class="t" style="left:642.23px;top:633.46px;font-size:16px;color:#3F3F76;transform:scaleX(1.0668);">No</span>
<span class="t" style="left:863.75px;top:633.46px;font-size:16px;font-weight:bold;color:#3F3F3F;transform:scaleX(0.9645);">yes</span>
<span class="t" style="left:1094.62px;top:633.46px;font-size:16px;color:#111;transform:scaleX(1.0776);">No</span>
<span class="t" style="left:1267.89px;top:633.46px;font-size:16px;font-weight:bold;color:#FA7D00;transform:scaleX(0.9530);">USA</span>
<span class="t" style="left:1419.89px;top:633.46px;font-size:16px;color:#111;transform:scaleX(1.0100);">Gmail</span>
<span class="t" style="left:7.63px;top:658.27px;font-size:17.4px;color:#111;transform:scaleX(0.9000);">20</span>
<span class="t" style="left:35.75px;top:659.46px;font-size:16px;color:#9C5700;transform:scaleX(1.0300);">michaelparkwood@gmail.com</span>
<span class="t" style="left:445.85px;top:659.46px;font-size:16px;font-weight:bold;color:#fff;transform:scaleX(0.9645);">yes</span>
<span class="t" style="left:642.23px;top:659.46px;font-size:16px;color:#3F3F76;transform:scaleX(1.0668);">No</span>
<span class="t" style="left:863.75px;top:659.46px;font-size:16px;font-weight:bold;color:#3F3F3F;transform:scaleX(0.9645);">yes</span>
<span class="t" style="left:1094.62px;top:659.46px;font-size:16px;color:#111;transform:scaleX(1.0776);">No</span>
<span class="t" style="left:1267.89px;top:659.46px;font-size:16px;font-weight:bold;color:#FA7D00;transform:scaleX(0.9530);">USA</span>
<span class="t" style="left:1419.89px;top:659.46px;font-size:16px;color:#111;transform:scaleX(1.0100);">Gmail</span>
<span class="t" style="left:7.71px;top:684.27px;font-size:17.4px;color:#111;transform:scaleX(0.9000);">21</span>
<span class="t" style="left:35.75px;top:685.46px;font-size:16px;color:#9C5700;transform:scaleX(1.0300);">michaelraleyssa@gmail.com</span>
<span class="t" style="left:445.85px;top:685.46px;font-size:16px;font-weight:bold;color:#fff;transform:scaleX(0.9645);">yes</span>
<span class="t" style="left:642.23px;top:685.46px;font-size:16px;color:#3F3F76;transform:scaleX(1.0668);">No</span>
<span class="t" style="left:863.75px;top:685.46px;font-size:16px;font-weight:bold;color:#3F3F3F;transform:scaleX(0.9645);">yes</span>
<span class="t" style="left:1094.62px;top:685.46px;font-size:16px;color:#111;transform:scaleX(1.0776);">No</span>
<span class="t" style="left:1267.89px;top:685.46px;font-size:16px;font-weight:bold;color:#FA7D00;transform:scaleX(0.9530);">USA</span>
<span class="t" style="left:1419.89px;top:685.46px;font-size:16px;color:#111;transform:scaleX(1.0100);">Gmail</span>
<span class="t" style="left:7.71px;top:710.27px;font-size:17.4px;color:#111;transform:scaleX(0.9000);">22</span>
<span class="t" style="left:35.75px;top:711.46px;font-size:16px;color:#9C5700;transform:scaleX(1.0300);">michaelrobertson23401@gmail.com</span>
<span class="t" style="left:445.85px;top:711.46px;font-size:16px;font-weight:bold;color:#fff;transform:scaleX(0.9645);">yes</span>
<span class="t" style="left:642.23px;top:711.46px;font-size:16px;color:#3F3F76;transform:scaleX(1.0668);">No</span>
<span class="t" style="left:863.75px;top:711.46px;font-size:16px;font-weight:bold;color:#3F3F3F;transform:scaleX(0.9645);">yes</span>
<span class="t" style="left:1094.62px;top:711.46px;font-size:16px;color:#111;transform:scaleX(1.0776);">No</span>
<span class="t" style="left:1267.89px;top:711.46px;font-size:16px;font-weight:bold;color:#FA7D00;transform:scaleX(0.9530);">USA</span>
<span class="t" style="left:1419.89px;top:711.46px;font-size:16px;color:#111;transform:scaleX(1.0100);">Gmail</span>
<span class="t" style="left:7.63px;top:736.27px;font-size:17.4px;color:#111;transform:scaleX(0.9000);">23</span>
<span class="t" style="left:35.75px;top:737.46px;font-size:16px;color:#9C5700;transform:scaleX(1.0300);">michaelrobisonkp@gmail.com</span>
<span class="t" style="left:445.85px;top:737.46px;font-size:16px;font-weight:bold;color:#fff;transform:scaleX(0.9645);">yes</span>
<span class="t" style="left:642.23px;top:737.46px;font-size:16px;color:#3F3F76;transform:scaleX(1.0668);">No</span>
<span class="t" style="left:863.75px;top:737.46px;font-size:16px;font-weight:bold;color:#3F3F3F;transform:scaleX(0.9645);">yes</span>
<span class="t" style="left:1094.62px;top:737.46px;font-size:16px;color:#111;transform:scaleX(1.0776);">No</span>
<span class="t" style="left:1267.89px;top:737.46px;font-size:16px;font-weight:bold;color:#FA7D00;transform:scaleX(0.9530);">USA</span>
<span class="t" style="left:1419.89px;top:737.46px;font-size:16px;color:#111;transform:scaleX(1.0100);">Gmail</span>
<span class="t" style="left:7.55px;top:762.27px;font-size:17.4px;color:#111;transform:scaleX(0.9000);">24</span>
<span class="t" style="left:35.75px;top:763.46px;font-size:16px;color:#9C5700;transform:scaleX(1.0300);">michaels@gmail.com</span>
<span class="t" style="left:445.85px;top:763.46px;font-size:16px;font-weight:bold;color:#fff;transform:scaleX(0.9645);">yes</span>
<span class="t" style="left:642.23px;top:763.46px;font-size:16px;color:#3F3F76;transform:scaleX(1.0668);">No</span>
<span class="t" style="left:863.75px;top:763.46px;font-size:16px;font-weight:bold;color:#3F3F3F;transform:scaleX(0.9645);">yes</span>
<span class="t" style="left:1094.62px;top:763.46px;font-size:16px;color:#111;transform:scaleX(1.0776);">No</span>
<span class="t" style="left:1267.89px;top:763.46px;font-size:16px;font-weight:bold;color:#FA7D00;transform:scaleX(0.9530);">USA</span>
<span class="t" style="left:1419.89px;top:763.46px;font-size:16px;color:#111;transform:scaleX(1.0100);">Gmail</span>
<span class="t" style="left:7.63px;top:788.27px;font-size:17.4px;color:#111;transform:scaleX(0.9000);">25</span>
<span class="t" style="left:35.75px;top:789.46px;font-size:16px;color:#9C5700;transform:scaleX(1.0300);">michaelsheltontry@gmail.com</span>
<span class="t" style="left:445.85px;top:789.46px;font-size:16px;font-weight:bold;color:#fff;transform:scaleX(0.9645);">yes</span>
<span class="t" style="left:642.23px;top:789.46px;font-size:16px;color:#3F3F76;transform:scaleX(1.0668);">No</span>
<span class="t" style="left:863.75px;top:789.46px;font-size:16px;font-weight:bold;color:#3F3F3F;transform:scaleX(0.9645);">yes</span>
<span class="t" style="left:1094.62px;top:789.46px;font-size:16px;color:#111;transform:scaleX(1.0776);">No</span>
<span class="t" style="left:1267.89px;top:789.46px;font-size:16px;font-weight:bold;color:#FA7D00;transform:scaleX(0.9530);">USA</span>
<span class="t" style="left:1419.89px;top:789.46px;font-size:16px;color:#111;transform:scaleX(1.0100);">Gmail</span>
<span class="t" style="left:7.63px;top:814.27px;font-size:17.4px;color:#111;transform:scaleX(0.9000);">26</span>
<span class="t" style="left:35.75px;top:815.46px;font-size:16px;color:#9C5700;transform:scaleX(1.0300);">michaelsses@gmail.com</span>
<span class="t" style="left:445.85px;top:815.46px;font-size:16px;font-weight:bold;color:#fff;transform:scaleX(0.9645);">yes</span>
<span class="t" style="left:642.23px;top:815.46px;font-size:16px;color:#3F3F76;transform:scaleX(1.0668);">No</span>
<span class="t" style="left:863.75px;top:815.46px;font-size:16px;font-weight:bold;color:#3F3F3F;transform:scaleX(0.9645);">yes</span>
<span class="t" style="left:1094.62px;top:815.46px;font-size:16px;color:#111;transform:scaleX(1.0776);">No</span>
<span class="t" style="left:1267.89px;top:815.46px;font-size:16px;font-weight:bold;color:#FA7D00;transform:scaleX(0.9530);">USA</span>
<span class="t" style="left:1419.89px;top:815.46px;font-size:16px;color:#111;transform:scaleX(1.0100);">Gmail</span>
<span class="t" style="left:7.71px;top:840.27px;font-size:17.4px;color:#111;transform:scaleX(0.9000);">27</span>
<span class="t" style="left:35.75px;top:841.46px;font-size:16px;color:#9C5700;transform:scaleX(1.0300);">michaeltennant54@gmail.com</span>
<span class="t" style="left:445.85px;top:841.46px;font-size:16px;font-weight:bold;color:#fff;transform:scaleX(0.9645);">yes</span>
<span class="t" style="left:642.23px;top:841.46px;font-size:16px;color:#3F3F76;transform:scaleX(1.0668);">No</span>
<span class="t" style="left:863.75px;top:841.46px;font-size:16px;font-weight:bold;color:#3F3F3F;transform:scaleX(0.9645);">yes</span>
<span class="t" style="left:1094.62px;top:841.46px;font-size:16px;color:#111;transform:scaleX(1.0776);">No</span>
<span class="t" style="left:1267.89px;top:841.46px;font-size:16px;font-weight:bold;color:#FA7D00;transform:scaleX(0.9530);">USA</span>
<span class="t" style="left:1419.89px;top:841.46px;font-size:16px;color:#111;transform:scaleX(1.0100);">Gmail</span>
<span class="t" style="left:7.63px;top:866.27px;font-size:17.4px;color:#111;transform:scaleX(0.9000);">28</span>
<span class="t" style="left:35.75px;top:867.46px;font-size:16px;color:#9C5700;transform:scaleX(1.0300);">michaeltesneyei@gmail.com</span>
<span class="t" style="left:445.85px;top:867.46px;font-size:16px;font-weight:bold;color:#fff;transform:scaleX(0.9645);">yes</span>
<span class="t" style="left:642.23px;top:867.46px;font-size:16px;color:#3F3F76;transform:scaleX(1.0668);">No</span>
<span class="t" style="left:863.75px;top:867.46px;font-size:16px;font-weight:bold;color:#3F3F3F;transform:scaleX(0.9645);">yes</span>
<span class="t" style="left:1094.62px;top:867.46px;font-size:16px;color:#111;transform:scaleX(1.0776);">No</span>
<span class="t" style="left:1267.89px;top:867.46px;font-size:16px;font-weight:bold;color:#FA7D00;transform:scaleX(0.9530);">USA</span>
<span class="t" style="left:1419.89px;top:867.46px;font-size:16px;color:#111;transform:scaleX(1.0100);">Gmail</span>
<span class="t" style="left:7.71px;top:892.27px;font-size:17.4px;color:#111;transform:scaleX(0.9000);">29</span>
<span class="t" style="left:35.75px;top:893.46px;font-size:16px;color:#9C5700;transform:scaleX(1.0300);">michaeltilt@gmail.com</span>
<span class="t" style="left:445.85px;top:893.46px;font-size:16px;font-weight:bold;color:#fff;transform:scaleX(0.9645);">yes</span>
<span class="t" style="left:642.23px;top:893.46px;font-size:16px;color:#3F3F76;transform:scaleX(1.0668);">No</span>
<span class="t" style="left:863.75px;top:893.46px;font-size:16px;font-weight:bold;color:#3F3F3F;transform:scaleX(0.9645);">yes</span>
<span class="t" style="left:1094.62px;top:893.46px;font-size:16px;color:#111;transform:scaleX(1.0776);">No</span>
<span class="t" style="left:1267.89px;top:893.46px;font-size:16px;font-weight:bold;color:#FA7D00;transform:scaleX(0.9530);">USA</span>
<span class="t" style="left:1419.89px;top:893.46px;font-size:16px;color:#111;transform:scaleX(1.0100);">Gmail</span>
<span class="t" style="left:7.71px;top:918.27px;font-size:17.4px;color:#111;transform:scaleX(0.9000);">30</span>
<span class="t" style="left:35.75px;top:919.46px;font-size:16px;color:#9C5700;transform:scaleX(1.0300);">michaeltuders@gmail.com</span>
<span class="t" style="left:445.85px;top:919.46px;font-size:16px;font-weight:bold;color:#fff;transform:scaleX(0.9645);">yes</span>
<span class="t" style="left:642.23px;top:919.46px;font-size:16px;color:#3F3F76;transform:scaleX(1.0668);">No</span>
<span class="t" style="left:863.75px;top:919.46px;font-size:16px;font-weight:bold;color:#3F3F3F;transform:scaleX(0.9645);">yes</span>
<span class="t" style="left:1094.62px;top:919.46px;font-size:16px;color:#111;transform:scaleX(1.0776);">No</span>
<span class="t" style="left:1267.89px;top:919.46px;font-size:16px;font-weight:bold;color:#FA7D00;transform:scaleX(0.9530);">USA</span>
<span class="t" style="left:1419.89px;top:919.46px;font-size:16px;color:#111;transform:scaleX(1.0100);">Gmail</span>
<div style="left:0px;top:929px;width:1540px;height:3px;background:#E6E6E6;"></div>
<div style="left:0px;top:929px;width:1540px;height:1px;background:#9A9A9A;"></div>
<div style="left:102px;top:929px;width:1px;height:3px;background:#9A9A9A;"></div>
<div style="left:258px;top:929px;width:1px;height:3px;background:#9A9A9A;"></div>
<div style="left:103px;top:929px;width:155px;height:3px;background:#FFFFFF;"></div>
</body></html>
